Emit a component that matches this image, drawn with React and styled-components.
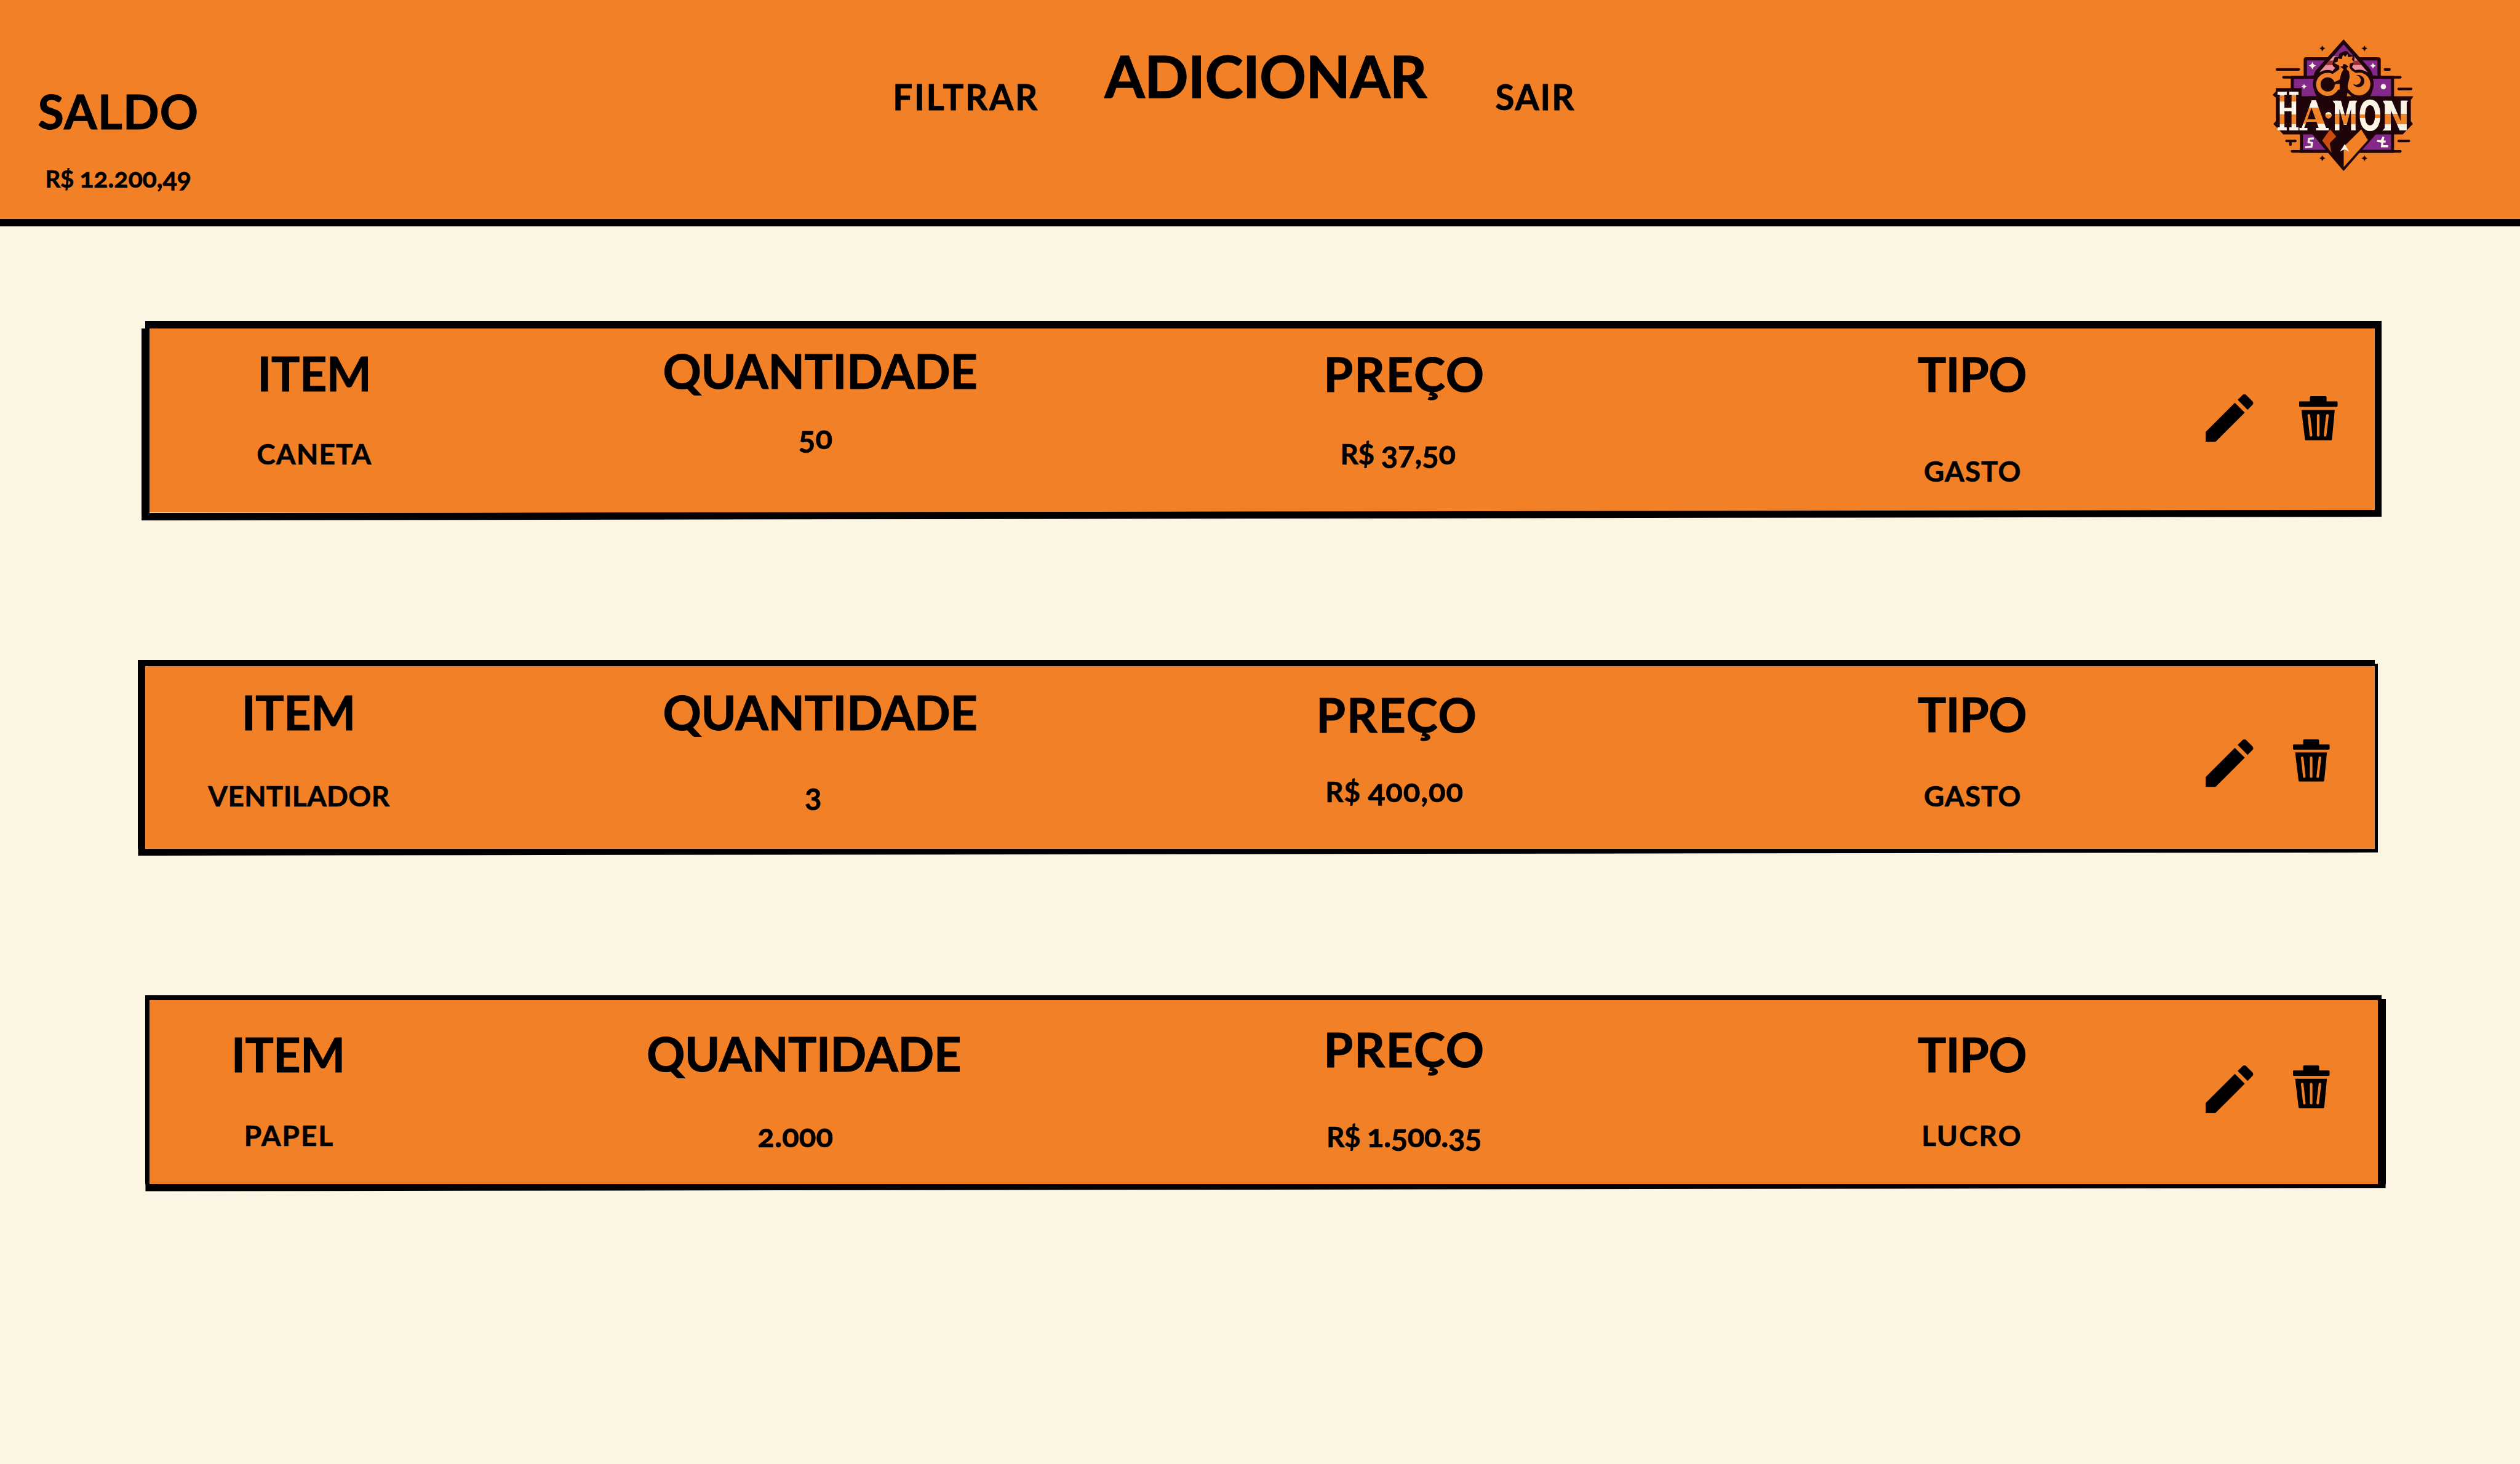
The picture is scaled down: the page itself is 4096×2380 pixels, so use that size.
import React from "react";
import styled, { createGlobalStyle } from "styled-components";

const u = (n) => `${+(n * (4096 / 4130)).toFixed(2)}px`;

const ORANGE = "#f28026";
const CREAM = "#fcf5e3";

const GlobalStyle = createGlobalStyle`
  body { margin: 0; background: ${CREAM}; }
`;

const Page = styled.div`
  width: 100%;
  height: 2380px;
  overflow: hidden;
  background: ${CREAM};
  color: #000;
  font-family: Lato, "Open Sans", sans-serif;
  font-weight: 700;
`;

const Header = styled.header`
  display: grid;
  grid-template-columns: ${u(1400)} ${u(2300)} 1fr;
  height: ${u(359)};
  background: ${ORANGE};
  border-bottom: 12px solid #000;
`;

const Column = styled.div`
  display: flex;
  flex-direction: column;
  align-items: flex-start;
  padding-top: ${(p) => u(p.$top || 0)};
`;

const Nav = styled.nav`
  display: grid;
  grid-template-columns: ${u(400)} ${u(630)} 1fr;
  align-items: start;
`;

const Text = styled.span`
  display: block;
  font-size: ${(p) => u(p.$size)};
  line-height: 1;
  white-space: nowrap;
  -webkit-text-stroke: 0.014em #000;
  letter-spacing: ${(p) => u(p.$track || 0)};
  margin-left: ${(p) => u(p.$x || 0)};
  margin-top: ${(p) => u(p.$y || 0)};
`;

const Digits = styled.span`
  font-size: 1.12em;
  line-height: 0;
  font-variant-numeric: oldstyle-nums;
`;

const LogoBox = styled.div`
  padding-top: ${u(50)};
  svg { display: block; width: ${u(280)}; height: ${u(250)}; }
`;

const List = styled.main`
  display: flex;
  flex-direction: column;
  align-items: flex-start;
`;

const Card = styled.article`
  display: grid;
  grid-template-columns: ${(p) => p.$cols.map(u).join(" ")};
  grid-template-rows: ${(p) => p.$rows.map(u).join(" ")};
  margin-left: ${(p) => u(p.$x)};
  margin-top: ${(p) => u(p.$gap)};
`;

const TopStroke = styled.div`
  grid-column: 1 / -1;
  background: #000;
  margin-left: ${(p) => u(p.$left || 0)};
  margin-right: ${(p) => u(p.$right || 0)};
`;

const SideStroke = styled.div`
  background: #000;
  margin-top: ${(p) => u(-(p.$rise || 0))};
  margin-bottom: ${(p) => u(-(p.$fall || 0))};
`;

const BottomStroke = styled.div`
  grid-column: 1 / -1;
  background: #000;
  margin-top: ${(p) => u(-(p.$rise || 0))};
  clip-path: polygon(
    0 ${(p) => u(p.$drop || 0)},
    100% 0,
    100% ${(p) => u(p.$end)},
    0 100%
  );
`;

const Body = styled.div`
  display: grid;
  grid-template-columns: ${(p) => u(1000 - p.$left)} ${u(1000)} ${u(1000)} ${u(600)} 1fr;
  background: ${ORANGE};
`;

const Actions = styled.div`
  display: flex;
  align-items: flex-start;
`;

const IconButton = styled.button`
  display: block;
  padding: 0;
  border: 0;
  background: none;
  color: #000;
  margin-left: ${(p) => u(p.$x)};
  margin-top: ${(p) => u(p.$y)};
  width: ${(p) => u(p.$w)};
  height: ${(p) => u(p.$h)};
  svg { display: block; width: 100%; height: 100%; overflow: visible; }
`;

const Pencil = () => (
  <svg viewBox="3 3 18 18" fill="currentColor">
    <path d="M3 17.25V21h3.75L17.81 9.94l-3.75-3.75L3 17.25zM20.71 7.04a.996.996 0 0 0 0-1.41l-2.34-2.34a.996.996 0 0 0-1.41 0l-1.83 1.83 3.75 3.75 1.83-1.83z" />
  </svg>
);

const Trash = () => (
  <svg viewBox="0 0 63 72.4" preserveAspectRatio="none">
    <path
      fill="currentColor"
      d="M19.5 0H43a2 2 0 0 1 2 2V8.6H61.5A1.5 1.5 0 0 1 63 10.1V16.2A1.5 1.5 0 0 1 61.5 17.7H1.5A1.5 1.5 0 0 1 0 16.2V10.1A1.5 1.5 0 0 1 1.5 8.6H17.6V2a2 2 0 0 1 2-2zM3.8 22.6H58.4L53.8 71a1.6 1.6 0 0 1-1.6 1.4H11.2A1.6 1.6 0 0 1 9.6 71z"
    />
    <path d="M15.9 31.6L19.5 64M31.3 31.6V64M46.4 31.6L42.6 64" stroke={ORANGE} strokeWidth="4.4" strokeLinecap="round" fill="none" />
  </svg>
);

const INK = "#1f0509";
const PURPLE = "#84298a";
const IVORY = "#f9f4e6";

const Spark = ({ x, y, r, fill }) => (
  <path
    fill={fill}
    d={`M${x} ${y - r}Q${x + r * 0.2} ${y - r * 0.2} ${x + r} ${y}Q${x + r * 0.2} ${y + r * 0.2} ${x} ${y + r}Q${x - r * 0.2} ${y + r * 0.2} ${x - r} ${y}Q${x - r * 0.2} ${y - r * 0.2} ${x} ${y - r}Z`}
  />
);

const Bands = ({ id, stops }) => (
  <linearGradient id={id} gradientUnits="userSpaceOnUse" x1="0" x2="0" y1="0" y2="750">
    <stop offset="0" stopColor={IVORY} />
    {stops.map(([a, b]) => (
      <React.Fragment key={a}>
        <stop offset={a / 750} stopColor={IVORY} />
        <stop offset={a / 750} stopColor="#f18329" />
        <stop offset={b / 750} stopColor="#f18329" />
        <stop offset={b / 750} stopColor={IVORY} />
      </React.Fragment>
    ))}
  </linearGradient>
);

const Logo = () => (
  <svg viewBox="0 0 840 750">
    <defs>
      <Bands id="bandH" stops={[[318, 348], [411, 459]]} />
      <Bands id="bandA" stops={[[378, 458]]} />
      <Bands id="bandM" stops={[[408, 459]]} />
      <Bands id="bandO" stops={[[411, 431]]} />
    </defs>
    <g stroke={INK} strokeWidth="13" strokeLinecap="round" fill="none">
      <path d="M94 190H201M625 190H647M126 229H240M600 229H700M692 286H753M141 542H184M160 542V560M692 542H742M168 593H700" />
    </g>
    <rect x="233" y="138" width="363" height="100" rx="4" fill={PURPLE} stroke={INK} strokeWidth="16" />
    <rect x="169" y="229" width="493" height="120" fill={PURPLE} stroke={INK} strokeWidth="15" />
    <rect x="214" y="480" width="448" height="113" fill={PURPLE} stroke={INK} strokeWidth="15" />
    <path d="M421 42L603 246L600 486L421 690L262 502L240 246Z" fill={INK} />
    <path d="M421 67L540 204H303Z" fill={PURPLE} />
    <path d="M371 125H472L532 195L540 204H303L310 194Z" fill="#ea8f9c" />
    <path d="M352 147H491L509 169H333Z" fill="#9b2f33" />
    <path d="M229 322V236H275Q262 268 288 322ZM611 322V236H565Q578 268 552 322Z" fill={PURPLE} />
    <path d="M250 220V151H318Q282 186 274 220ZM582 220V151H524Q556 186 566 220Z" fill={PURPLE} />
    <g stroke={INK} strokeWidth="30" strokeLinejoin="round" fill={ORANGE}>
      <circle cx="343" cy="264" r="56" />
      <circle cx="497" cy="262" r="56" />
      <path d="M372 215L402 180L382 165L388 142L410 140L413 122L432 115L440 128L460 136L455 160L444 182L472 208Z" />
    </g>
    <circle cx="343" cy="264" r="57" fill={ORANGE} />
    <circle cx="497" cy="262" r="56" fill={ORANGE} />
    <path d="M366 213L400 190V172L374 158L392 152L394 136L412 140L418 118L430 128L440 114L444 130L466 126L462 142L474 154L452 162L450 180L460 194L486 210L470 290H372Z" fill={ORANGE} />
    <circle cx="343" cy="264" r="35" fill={INK} />
    <path d="M482 220A30 30 0 1 1 466 259A23 23 0 1 0 482 220Z" fill={INK} />
    <path d="M405 177L418 173L420 163L430 165L440 172L446 176L436 182L438 192L448 200L451 228L441 270L446 302L438 340H385L402 310V262L384 262L368 273L372 255L402 240L411 207L421 190L414 184Z" fill={INK} />
    <path d="M440 305L460 322L440 342L434 338Z" fill={ORANGE} />
    <path d="M72 315L88 299V282H215V322H765L752 340V445L762 458L712 510H125L76 458L88 445V330Z" fill={INK} />
    <path d="M355 485L385 520L353 553L362 600L316 540Z" fill="#cb4b11" />
    <path d="M508 485L541 538L422 670V570Z" fill={ORANGE} />
    <path d="M427 557L449 595L427 583L404 593Z" fill={IVORY} />
    <path d="M275 529L251 531L249 548L266 552L263 570L232 573M586 541L606 545L618 522M616 526L612 546L610 568H641M612 544L628 545" fill="none" stroke={IVORY} strokeWidth="10" />
    <Spark x={317} y={87} r={15} fill={INK} />
    <Spark x={524} y={87} r={15} fill={INK} />
    <Spark x={317} y={627} r={15} fill={INK} />
    <Spark x={524} y={627} r={15} fill={INK} />
    <Spark x={268} y={172} r={19} fill={IVORY} />
    <Spark x={566} y={172} r={15} fill={IVORY} />
    <Spark x={227} y={274} r={14} fill={IVORY} />
    <circle cx="617" cy="275" r="13" fill={IVORY} />
    <g fontFamily='"DejaVu Sans", sans-serif' fontWeight="700">
      <text x="91" y="491" fontSize="262" textLength="114" lengthAdjust="spacingAndGlyphs" fill="url(#bandH)" fontFamily='"DejaVu Serif", serif'>H</text>
      <text x="206" y="491" fontSize="201" textLength="140" lengthAdjust="spacingAndGlyphs" fill="url(#bandA)" fontFamily='"DejaVu Serif", serif'>A</text>
      <text x="367" y="491" fontSize="201" textLength="125" lengthAdjust="spacingAndGlyphs" fill="url(#bandM)">M</text>
      <text x="494" y="489" fontSize="203" textLength="115" lengthAdjust="spacingAndGlyphs" fill="url(#bandO)">O</text>
      <text x="609" y="491" fontSize="201" textLength="138" lengthAdjust="spacingAndGlyphs" fill="url(#bandM)">N</text>
    </g>
    <path d="M367 344H392L380 362ZM489 344H466L478 362ZM614 344H640L624 364ZM739 344H706L722 362ZM612 491H650L632 470Z" fill={IVORY} />
    <circle cx="347" cy="415" r="16" fill="url(#bandO)" />
  </svg>
);

const TITLES = {
  item: { text: "ITEM", track: -0.4 },
  qty: { text: "QUANTIDADE", track: -0.3 },
  price: { text: "PREÇO", track: 2 },
  kind: { text: "TIPO", track: -0.6 },
};

const RECORDS = [
  {
    card: { x: 232, gap: 155, cols: [12.6, 3647.3, 11.5], rows: [12, 302, 13] },
    top: { $left: 6.4 },
    left: 1.5,
    bottom: { $rise: 4.3, $drop: 5.3, $end: 11.3 },
    bodyLeft: 244.6,
    fields: [
      { id: "item", top: 34.3, x: 177.4, value: "CANETA", vx: 176.2, gap: 71.2, track: 1.25 },
      { id: "qty", top: 30.3, x: 86.5, value: "", digits: "50", vx: 308.5, gap: 49.6 },
      { id: "price", top: 36, x: 169.4, value: "R$ ", digits: "37,50", vx: 196.5, gap: 69.2, track: -0.3 },
      { id: "kind", top: 35.3, x: 143, value: "GASTO", vx: 153, gap: 97.9, track: 1.1 },
    ],
    edit: 108,
    remove: { $x: 75.3, $y: 111.3, $w: 63, $h: 72.4 },
  },
  {
    card: { x: 226.3, gap: 228.7, cols: [11.7, 3653.9, 5.6], rows: [10.5, 298.8, 11.5] },
    top: { $right: 5.6 },
    side: 4.2,
    bottom: { $end: 6.3 },
    bodyLeft: 238,
    fields: [
      { id: "item", top: 36.1, x: 158.1, value: "VENTILADOR", vx: 103, gap: 75.9, track: 0.4 },
      { id: "qty", top: 36.1, x: 86.5, value: "", digits: "3", vx: 319, gap: 75.9 },
      { id: "price", top: 39.8, x: 157, value: "R$ ", digits: "400,00", vx: 172.1, gap: 64.9, track: 0.8 },
      { id: "kind", top: 39.1, x: 143, value: "GASTO", vx: 153, gap: 72.9, track: 1.1 },
    ],
    edit: 119.8,
    remove: { $x: 65, $y: 119.8, $w: 60, $h: 69 },
  },
  {
    card: { x: 238.4, gap: 229.2, cols: [6.2, 3652.8, 12.4], rows: [7.6, 301.4, 12] },
    top: { $right: 6.4 },
    side: 1.8,
    bottom: { $end: 6.6 },
    bodyLeft: 244.6,
    fields: [
      { id: "item", top: 49.4, x: 134.5, value: "PAPEL", vx: 155.4, gap: 71.8, track: 2.05 },
      { id: "qty", top: 49, x: 59.7, value: "", digits: "2.000", vx: 241.5, gap: 73.9 },
      { id: "price", top: 41.4, x: 169.4, value: "R$ ", digits: "1.500.35", vx: 174, gap: 81.5, track: -0.5 },
      { id: "kind", top: 49.4, x: 143, value: "LUCRO", vx: 149.1, gap: 71.8, track: 2.1 },
    ],
    edit: 107.4,
    remove: { $x: 65, $y: 106.7, $w: 60, $h: 70 },
  },
];

function Record({ card, top, left, side, bottom, bodyLeft, fields, edit, remove }) {
  return (
    <Card $x={card.x} $gap={card.gap} $cols={card.cols} $rows={card.rows}>
      <TopStroke {...top} />
      <SideStroke $fall={left} />
      <Body $left={bodyLeft}>
        {fields.map((f) => (
          <Column key={f.id} $top={f.top}>
            <Text $size={77.8} $x={f.x} $track={TITLES[f.id].track}>{TITLES[f.id].text}</Text>
            <Text $size={46.2} $x={f.vx} $y={f.gap} $track={f.track}>
              {f.value}
              {f.digits && <Digits>{f.digits}</Digits>}
            </Text>
          </Column>
        ))}
        <Actions>
          <IconButton aria-label="Editar" $x={15} $y={edit} $w={78} $h={78}><Pencil /></IconButton>
          <IconButton aria-label="Excluir" {...remove}><Trash /></IconButton>
        </Actions>
      </Body>
      <SideStroke $rise={side} />
      <BottomStroke {...bottom} />
    </Card>
  );
}

export default function App() {
  return (
    <Page>
      <GlobalStyle />
      <Header>
        <Column $top={143}>
          <Text $size={77.8} $x={62} $track={1.2}>SALDO</Text>
          <Text $size={39} $x={74} $y={52.3} $track={-0.3}>R$ <Digits>12.200,49</Digits></Text>
        </Column>
        <Nav>
          <Text as="a" $size={57} $x={63.4} $y={130.1} $track={2.7}>FILTRAR</Text>
          <Text as="a" $size={94.7} $x={10.5} $y={76.3} $track={-0.55}>ADICIONAR</Text>
          <Text as="a" $size={57} $x={20.6} $y={130.1} $track={1.9}>SAIR</Text>
        </Nav>
        <LogoBox><Logo /></LogoBox>
      </Header>
      <List>
        {RECORDS.map((r, i) => <Record key={i} {...r} />)}
      </List>
    </Page>
  );
}
